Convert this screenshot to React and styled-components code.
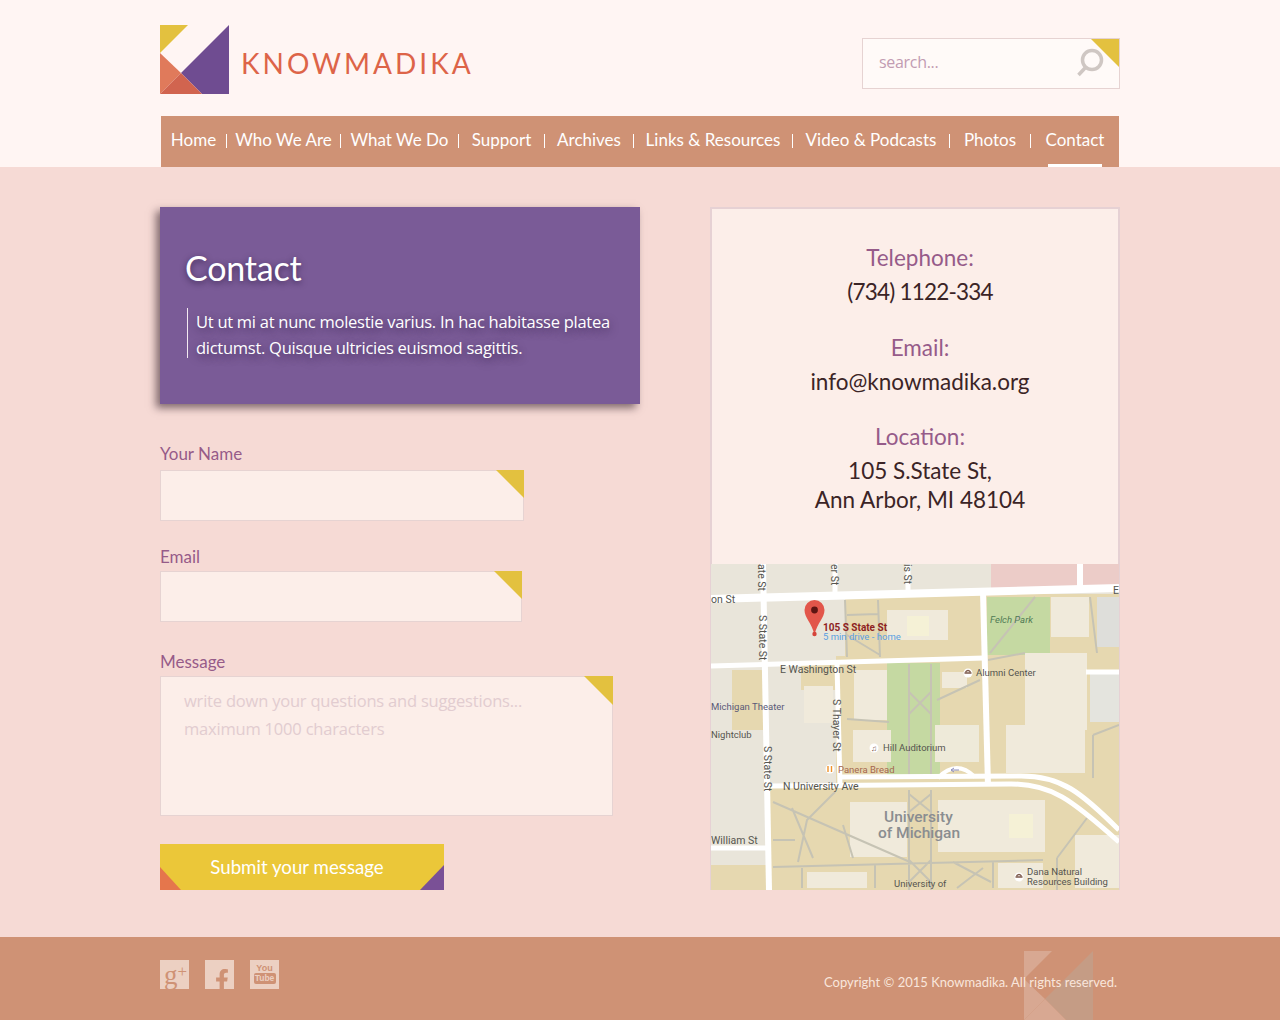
import React from 'react';
import styled, { createGlobalStyle } from 'styled-components';
import { FaFacebookF } from 'react-icons/fa';

const COLORS = {
  headerBg: '#fff5f3',
  pageBg: '#f6dad5',
  terracotta: '#cf9275',
  purple: '#7a5b97',
  plum: '#965b89',
  yellow: '#e3c13f',
  field: '#fceee9',
  fieldBorder: '#e6d3d2',
  ink: '#3b2426'
};

const DISPLAY_FONT = "Lato, 'Open Sans', sans-serif";
const BODY_FONT = "'Open Sans', Lato, sans-serif";

const GlobalStyle = createGlobalStyle`
  html, body {
    margin: 0;
    padding: 0;
    background: ${COLORS.pageBg};
  }
  * {
    box-sizing: border-box;
  }
`;

const Page = styled.div`
  width: 1280px;
  font-family: ${DISPLAY_FONT};
`;

const Header = styled.header`
  height: 167px;
  background: ${COLORS.headerBg};
`;

const Wrap = styled.div`
  width: 960px;
  margin: 0 auto;
`;

const TopRow = styled.div`
  height: 116px;
  display: flex;
  justify-content: space-between;
  padding-top: 25px;
`;

const Brand = styled.a`
  display: flex;
  align-items: flex-start;
  gap: 12px;
`;

const BrandName = styled.span`
  margin-top: 19px;
  font-family: ${DISPLAY_FONT};
  font-size: 28px;
  line-height: 38px;
  letter-spacing: 3px;
  color: #dd6448;
`;

const Corner = styled.span`
  position: absolute;
  top: 0;
  right: 0;
  width: ${(props) => props.$size}px;
  height: ${(props) => props.$size}px;
  background: ${COLORS.yellow};
  clip-path: polygon(0 0, 100% 0, 100% 100%);
  pointer-events: none;
`;

const SearchBox = styled.div`
  position: relative;
  width: 258px;
  height: 51px;
  margin-top: 13px;
  border: 1px solid ${COLORS.fieldBorder};
  background: #fffaf8;
`;

const SearchInput = styled.input`
  display: block;
  width: 200px;
  height: 45px;
  padding: 0 0 0 16px;
  border: 0;
  outline: 0;
  background: transparent;
  font-family: ${BODY_FONT};
  font-size: 16px;
  letter-spacing: -0.3px;

  &::placeholder {
    color: #c29cb2;
    opacity: 1;
  }
`;

const SearchIcon = styled.svg`
  position: absolute;
  top: 8px;
  right: 15px;
  width: 29px;
  height: 31px;
`;

const Nav = styled.nav`
  display: flex;
  align-items: center;
  width: 958px;
  height: 51px;
  margin-left: 1px;
  background: ${COLORS.terracotta};
`;

const NavItem = styled.a`
  position: relative;
  display: block;
  width: ${(props) => props.$width}px;
  height: 51px;
  padding-top: 11px;
  text-align: center;
  font-size: 17px;
  line-height: 26px;
  color: #fff;

  ${(props) =>
    props.$active &&
    `
    &::after {
      content: '';
      position: absolute;
      left: 17px;
      bottom: 0;
      width: 54px;
      height: 3px;
      background: #fff;
    }
  `}
`;

const NavDivider = styled.span`
  flex: none;
  width: 1px;
  height: 14px;
  margin-top: -1px;
  background: #fff;
`;

const Main = styled.main`
  height: 770px;
  padding-top: 40px;
  background: ${COLORS.pageBg};
`;

const Columns = styled(Wrap)`
  display: flex;
  justify-content: space-between;
  align-items: flex-start;
`;

const LeftColumn = styled.section`
  width: 480px;
`;

const Intro = styled.div`
  height: 197px;
  margin-bottom: 38px;
  padding: 37px 26px 0;
  background: ${COLORS.purple};
  box-shadow: -4px 4px 8px rgba(50, 30, 40, 0.6);
  color: #fff;
`;

const IntroTitle = styled.h1`
  margin: 0 0 0 -1px;
  font-size: 34px;
  line-height: 48px;
  font-weight: 400;
  letter-spacing: -0.2px;
  text-shadow: 0 2px 6px rgba(40, 20, 60, 0.7);
`;

const IntroText = styled.p`
  width: 440px;
  height: 50px;
  margin: 16px 0 0 1px;
  padding: 1px 0 0 8px;
  border-left: 1px solid #f4eaf2;
  font-family: ${BODY_FONT};
  font-size: 16.5px;
  line-height: 26px;
  letter-spacing: -0.27px;
  text-shadow: 0 3px 8px rgba(40, 20, 60, 0.6);
`;

const Field = styled.div`
  position: relative;
  width: ${(props) => props.$width}px;
  height: ${(props) => props.$height}px;
  margin-bottom: ${(props) => props.$gap}px;
`;

const FieldLabel = styled.label`
  display: block;
  height: ${(props) => props.$height || 26}px;
  padding-top: 1px;
  font-size: 17px;
  line-height: 22px;
  color: ${COLORS.plum};
`;

const fieldStyles = `
  display: block;
  width: 100%;
  border: 1px solid ${COLORS.fieldBorder};
  outline: 0;
  background: ${COLORS.field};
  border-radius: 0;
  font-family: ${BODY_FONT};
  font-size: 16.5px;
  letter-spacing: -0.2px;
`;

const TextInput = styled.input`
  ${fieldStyles}
  height: 100%;
`;

const TextArea = styled.textarea`
  ${fieldStyles}
  height: 100%;
  padding: 10px 23px;
  line-height: 28px;
  resize: none;

  &::placeholder {
    color: #e2ccd0;
    opacity: 1;
  }
`;

const SubmitButton = styled.button`
  position: relative;
  display: block;
  width: 284px;
  height: 46px;
  margin-top: 28px;
  padding: 0 10px 0 0;
  border: 0;
  background: #ebc739;
  font-family: ${DISPLAY_FONT};
  font-size: 18.7px;
  color: #fff;

  &::before,
  &::after {
    content: '';
    position: absolute;
    bottom: 0;
  }

  &::before {
    left: 0;
    width: 21px;
    height: 23px;
    background: #e5764c;
    clip-path: polygon(0 0, 100% 100%, 0 100%);
  }

  &::after {
    right: 0;
    width: 24px;
    height: 25px;
    background: #7a5096;
    clip-path: polygon(100% 0, 100% 100%, 0 100%);
  }
`;

const ContactCard = styled.aside`
  width: 410px;
  height: 683px;
  padding-top: 34px;
  border: 2px solid #e6d1d4;
  border-bottom-width: 1px;
  background: ${COLORS.field};
  text-align: center;
`;

const ContactBlock = styled.div`
  height: ${(props) => props.$height}px;
  padding-left: 10px;
`;

const ContactLabel = styled.h2`
  margin: 0;
  font-size: 22.5px;
  line-height: 30px;
  font-weight: 400;
  color: ${COLORS.plum};
`;

const ContactValue = styled.div`
  margin-top: ${(props) => props.$top}px;
  font-size: 22.5px;
  line-height: 29px;
  letter-spacing: ${(props) => (props.$tight ? '-0.8px' : '0')};
  color: ${COLORS.ink};
`;

const MapFrame = styled.div`
  width: 408px;
  height: 326px;
  margin-left: -1px;
  overflow: hidden;
`;

const MapSvg = styled.svg`
  display: block;
  font-family: Roboto, sans-serif;
`;

const Footer = styled.footer`
  position: relative;
  height: 83px;
  overflow: hidden;
  background: ${COLORS.terracotta};
`;

const FooterRow = styled(Wrap)`
  display: flex;
  justify-content: space-between;
  padding-top: 23px;
`;

const Socials = styled.div`
  display: flex;
  gap: 16px;
`;

const SocialTile = styled.a`
  display: flex;
  flex-direction: ${(props) => (props.$stack ? 'column' : 'row')};
  align-items: ${(props) => (props.$stack ? 'center' : 'flex-end')};
  justify-content: ${(props) => (props.$stack ? 'flex-start' : 'flex-end')};
  width: 29px;
  height: 29px;
  padding-top: ${(props) => (props.$stack ? '4px' : '0')};
  overflow: hidden;
  background: #ecd0c2;
  color: ${COLORS.terracotta};
`;

const FacebookGlyph = styled(FaFacebookF)`
  width: 22px;
  height: 22px;
  margin: 0 1px -2px 0;
`;

const GooglePlus = styled.span`
  width: 100%;
  padding-left: 4px;
  font-family: 'Liberation Serif', serif;
  font-size: 27px;
  line-height: 27px;
`;

const PlusSign = styled.span`
  font-size: 17px;
  vertical-align: 7px;
`;

const TubeWord = styled.span`
  font-family: 'Liberation Sans Narrow', 'Liberation Sans', sans-serif;
  font-weight: 700;
  font-size: 9px;
  line-height: 9px;
`;

const TubeBadge = styled(TubeWord)`
  width: 22px;
  height: 11px;
  border-radius: 2px;
  line-height: 11px;
  font-size: 8.5px;
  text-align: center;
  background: ${COLORS.terracotta};
  color: #ecd0c2;
`;

const Copyright = styled.div`
  position: relative;
  margin: 12px 3px 0 0;
  font-size: 13px;
  line-height: 20px;
  color: #f9e6dc;
`;

const Watermark = styled.span`
  position: absolute;
  left: 1024px;
  top: 14px;
`;

const LogoMark = ({ top, right, left, low }) => (
  <svg width="69" height="69" viewBox="0 0 69 69">
    <polygon points="0,0 28,0 0,28" fill={top} />
    <polygon points="69,0 21,48 42,69 69,69" fill={right} />
    <polygon points="0,28 21,48 0,69" fill={left} />
    <polygon points="21,48 42,69 0,69" fill={low} />
  </svg>
);

const BASE_AREAS = [
  { x: 0, y: 0, w: 408, h: 326, fill: '#e9e5da' },
  { x: 280, y: 0, w: 128, h: 24, fill: '#ecccc8' },
  { x: 134, y: 30, w: 274, h: 75, fill: '#e6d8b0' },
  { x: 125, y: 92, w: 283, h: 234, fill: '#e6d8b0' },
  { x: 90, y: 100, w: 40, h: 26, fill: '#e6d8b0' },
  { x: 21, y: 106, w: 32, h: 60, fill: '#e6d8b0' },
  { x: 58, y: 222, w: 80, h: 104, fill: '#e6d8b0' },
  { x: 0, y: 301, w: 60, h: 25, fill: '#e6d8b0' },
  { x: 276, y: 33, w: 63, h: 58, fill: '#c5d9a2' },
  { x: 176, y: 99, w: 53, h: 114, fill: '#c5d9a2' },
  { x: 386, y: 33, w: 22, h: 50, fill: '#dededa' },
  { x: 379, y: 110, w: 29, h: 48, fill: '#e4e4de' }
];

const BUILDINGS = [
  [176, 46, 61, 30, '#f0eadb'],
  [196, 52, 22, 20, '#f5f1d6'],
  [340, 33, 38, 40, '#f0eadb'],
  [314, 89, 62, 77, '#f0eadb'],
  [295, 161, 79, 48, '#f0eadb'],
  [143, 106, 33, 50, '#f0eadb'],
  [93, 122, 29, 37, '#f0eadb'],
  [142, 166, 38, 32, '#f0eadb'],
  [224, 161, 44, 37, '#eeead9'],
  [231, 108, 25, 16, '#f0eadb'],
  [139, 238, 57, 55, '#f0eadb'],
  [227, 236, 107, 52, '#f0eadb'],
  [298, 250, 24, 24, '#f5f1d6'],
  [287, 299, 45, 25, '#f0eadb'],
  [364, 271, 44, 53, '#f0eadb'],
  [96, 308, 60, 16, '#f0eadb']
];

const PATHS = [
  'M134 36 L136 93',
  'M167 36 L169 93',
  'M136 51 L167 50',
  'M136 71 L169 91',
  'M198 100 V214',
  'M220 100 V214',
  'M198 128 L220 150 M220 128 L198 150',
  'M226 136 L269 116',
  'M279 89 L324 33',
  'M277 96 L314 89',
  'M379 33 L386 89',
  'M136 155 L178 158',
  'M62 238 L199 298',
  'M81 244 L102 294',
  'M132 261 L142 294',
  'M124 228 L96 256 L87 298',
  'M62 303 L332 296',
  'M62 276 H84',
  'M91 304 V324',
  'M164 300 V324',
  'M198 226 V326 M220 226 V326',
  'M198 230 L220 248 M220 230 L198 248',
  'M198 296 L220 318 M220 296 L198 318',
  'M242 298 L280 318 M246 324 L272 304',
  'M282 298 V324',
  'M346 294 L376 254 M346 294 V326',
  'M382 171 V214 M382 171 L408 161'
];

const ROADS = [
  { d: 'M0 35 L408 24', w: 8 },
  { d: 'M0 102 L273 94', w: 5 },
  { d: 'M52 0 L58 326', w: 6 },
  { d: 'M272 28 L277 222', w: 6 },
  { d: 'M124 0 V34', w: 5 },
  { d: 'M197 0 V32', w: 5 },
  { d: 'M369 0 V26', w: 6 },
  { d: 'M126 100 L129 222', w: 5 },
  { d: 'M60 222 L300 220 C340 220 360 235 408 278', w: 5 },
  { d: 'M130 213 L310 212 C350 212 370 228 408 266', w: 5 },
  { d: 'M227 214 Q245 195 264 213', w: 4 },
  { d: 'M375 108 H408', w: 5 },
  { d: 'M0 284 H55', w: 5 }
];

const MAP_LABELS = [
  { x: 0, y: 39, text: 'on St', size: 10.5 },
  { x: 402, y: 30, text: 'E', size: 10.5 },
  { x: 69, y: 109, text: 'E Washington St', size: 10.5 },
  { x: 279, y: 59, text: 'Felch Park', italic: true, fill: '#4f7a55' },
  { x: 265, y: 112, text: 'Alumni Center' },
  { x: 0, y: 146, text: 'Michigan Theater', fill: '#5a5a78' },
  { x: 0, y: 174, text: 'Nightclub' },
  { x: 172, y: 187, text: 'Hill Auditorium' },
  { x: 127, y: 209, text: 'Panera Bread', fill: '#a5674f' },
  { x: 72, y: 226, text: 'N University Ave', size: 10.5 },
  { x: 0, y: 280, text: 'William St', size: 10.5 },
  { x: 183, y: 323, text: 'University of' },
  { x: 316, y: 311, text: 'Dana Natural' },
  { x: 316, y: 321, text: 'Resources Building' }
];

const ROTATED_LABELS = [
  { x: 47, y: 0, text: 'ate St' },
  { x: 120, y: 0, text: 'er St' },
  { x: 193, y: 0, text: 'is St' },
  { x: 48, y: 51, text: 'S State St' },
  { x: 122, y: 135, text: 'S Thayer St' },
  { x: 53, y: 182, text: 'S State St' }
];

const MapDrawing = () => (
  <MapSvg width="408" height="326" viewBox="0 0 408 326">
    {BASE_AREAS.map((area) => (
      <rect key={`${area.x}-${area.y}`} x={area.x} y={area.y} width={area.w} height={area.h} fill={area.fill} />
    ))}
    {BUILDINGS.map(([x, y, w, h, fill]) => (
      <rect key={`${x}-${y}`} x={x} y={y} width={w} height={h} fill={fill} />
    ))}
    <path d={PATHS.join(' ')} fill="none" stroke="#c6c3b4" strokeWidth="2" />
    {ROADS.map((road) => (
      <path key={road.d} d={road.d} fill="none" stroke="#fff" strokeWidth={road.w} />
    ))}

    {MAP_LABELS.map((label) => (
      <text
        key={label.text}
        x={label.x}
        y={label.y}
        fontSize={label.size || 9.5}
        fontStyle={label.italic ? 'italic' : 'normal'}
        fill={label.fill || '#55554f'}
      >
        {label.text}
      </text>
    ))}
    {ROTATED_LABELS.map((label) => (
      <text
        key={`${label.text}-${label.y}`}
        transform={`translate(${label.x} ${label.y}) rotate(90)`}
        fontSize="10.5"
        fill="#55554f"
      >
        {label.text}
      </text>
    ))}
    <text x="173" y="258" fontSize="15.5" fontWeight="500" fill="#8a8d90">University</text>
    <text x="167" y="274" fontSize="15.5" fontWeight="500" fill="#8a8d90">of Michigan</text>

    <circle cx="257" cy="109" r="4.5" fill="#fff" />
    <path d="M253.5 109 h7 M254.5 108 q2.5 -3 5 0" stroke="#7d5a4c" strokeWidth="1.3" fill="none" />
    <circle cx="163" cy="184" r="4.5" fill="#fff" />
    <text x="160" y="187" fontSize="8" fill="#7d5a4c">♫</text>
    <circle cx="119" cy="205" r="4.5" fill="#fff" />
    <path d="M117 202 v6 M120.5 202 v6" stroke="#f0932b" strokeWidth="1.4" />
    <circle cx="308" cy="313" r="4.5" fill="#fff" />
    <path d="M304.5 313 h7 M305.5 312 q2.5 -3 5 0" stroke="#7d5a4c" strokeWidth="1.3" fill="none" />
    <path d="M240 206 h8 M243 204 l-3 2 l3 2" stroke="#8d8fc0" strokeWidth="1" fill="none" />

    <path
      d="M103.5 36 a10 10 0 0 1 10 10 c0 8 -7 12 -10 25 c-3 -13 -10 -17 -10 -25 a10 10 0 0 1 10 -10z"
      fill="#e2564a"
    />
    <circle cx="103.5" cy="46" r="3.4" fill="#5c1512" />
    <circle cx="103.5" cy="70" r="2.2" fill="#d5443a" />
    <text x="112" y="67" fontSize="10" fontWeight="700" fill="#8e1f1f">105 S State St</text>
    <text x="112" y="76" fontSize="9.5" fill="#5a9fe0">5 min drive - home</text>
  </MapSvg>
);

const NAV_ITEMS = [
  { label: 'Home', width: 65 },
  { label: 'Who We Are', width: 113 },
  { label: 'What We Do', width: 117 },
  { label: 'Support', width: 85 },
  { label: 'Archives', width: 88 },
  { label: 'Links & Resources', width: 158 },
  { label: 'Video & Podcasts', width: 156 },
  { label: 'Photos', width: 80 },
  { label: 'Contact', width: 88, active: true }
];

const App = () => {
  return (
    <Page>
      <GlobalStyle />
      <Header>
        <Wrap>
          <TopRow>
            <Brand>
              <LogoMark top="#e3c13f" right="#6f4c91" left="#e07a5b" low="#d1644f" />
              <BrandName>KNOWMADIKA</BrandName>
            </Brand>
            <SearchBox>
              <SearchInput placeholder="search..." />
              <SearchIcon viewBox="0 0 29 31">
                <circle cx="17" cy="13" r="9.5" fill="none" stroke="#cfc7c3" strokeWidth="3.5" />
                <path d="M10 21 L3.5 28" stroke="#cfc7c3" strokeWidth="3.5" />
              </SearchIcon>
              <Corner $size={28} />
            </SearchBox>
          </TopRow>
          <Nav>
            {NAV_ITEMS.map((item, index) => (
              <React.Fragment key={item.label}>
                {index > 0 && <NavDivider />}
                <NavItem $width={item.width} $active={item.active}>
                  {item.label}
                </NavItem>
              </React.Fragment>
            ))}
          </Nav>
        </Wrap>
      </Header>

      <Main>
        <Columns>
          <LeftColumn>
            <Intro>
              <IntroTitle>Contact</IntroTitle>
              <IntroText>
                Ut ut mi at nunc molestie varius. In hac habitasse platea dictumst. Quisque ultricies euismod sagittis.
              </IntroText>
            </Intro>

            <FieldLabel $height={28}>Your Name</FieldLabel>
            <Field $width={364} $height={51} $gap={24}>
              <TextInput />
              <Corner $size={28} />
            </Field>
            <FieldLabel>Email</FieldLabel>
            <Field $width={362} $height={51} $gap={28}>
              <TextInput />
              <Corner $size={28} />
            </Field>
            <FieldLabel>Message</FieldLabel>
            <Field $width={453} $height={140} $gap={0}>
              <TextArea placeholder={'write down your questions and suggestions...\nmaximum 1000 characters'} />
              <Corner $size={29} />
            </Field>
            <SubmitButton>Submit your message</SubmitButton>
          </LeftColumn>

          <ContactCard>
            <ContactBlock $height={90}>
              <ContactLabel>Telephone:</ContactLabel>
              <ContactValue $top={4} $tight>(734) 1122-334</ContactValue>
            </ContactBlock>
            <ContactBlock $height={89}>
              <ContactLabel>Email:</ContactLabel>
              <ContactValue $top={4}>info@knowmadika.org</ContactValue>
            </ContactBlock>
            <ContactBlock $height={142}>
              <ContactLabel>Location:</ContactLabel>
              <ContactValue $top={4}>105 S.State St,</ContactValue>
              <ContactValue $top={0}>Ann Arbor, MI 48104</ContactValue>
            </ContactBlock>
            <MapFrame>
              <MapDrawing />
            </MapFrame>
          </ContactCard>
        </Columns>
      </Main>

      <Footer>
        <Watermark>
          <LogoMark top="#d8a892" right="#c59c85" left="#d8a892" low="#d8a892" />
        </Watermark>
        <FooterRow>
          <Socials>
            <SocialTile>
              <GooglePlus>
                g<PlusSign>+</PlusSign>
              </GooglePlus>
            </SocialTile>
            <SocialTile>
              <FacebookGlyph />
            </SocialTile>
            <SocialTile $stack>
              <TubeWord>You</TubeWord>
              <TubeBadge>Tube</TubeBadge>
            </SocialTile>
          </Socials>
          <Copyright>Copyright © 2015 Knowmadika. All rights reserved.</Copyright>
        </FooterRow>
      </Footer>
    </Page>
  );
};

export default App;
